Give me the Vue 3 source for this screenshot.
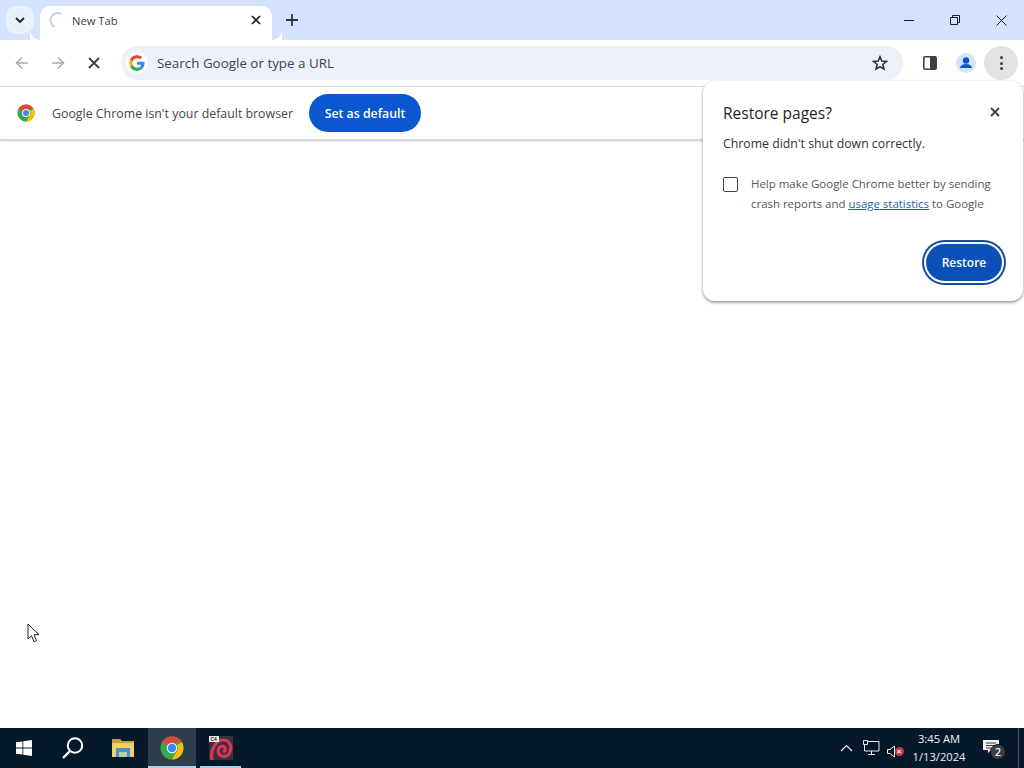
<script setup>
</script>

<template>
  <div class="screen">
    <header class="titlebar">
      <button class="tabsearch">
        <svg width="10" height="6" viewBox="0 0 10 6"><path d="M1 1l4 4 4-4" fill="none" stroke="#1f1f1f" stroke-width="1.8"/></svg>
      </button>
      <div class="tab">
        <svg class="spinner" width="16" height="16" viewBox="0 0 16 16"><path d="M13 1.8A7 7 0 0 0 6.5 14.8" fill="none" stroke="#c3d0e8" stroke-width="2"/></svg>
        <span class="tabtitle">New Tab</span>
        <svg class="tabclose" width="10" height="10" viewBox="0 0 10 10"><path d="M1 1l8 8M9 1l-8 8" stroke="#1f1f1f" stroke-width="1.7"/></svg>
      </div>
      <svg class="newtab" width="12" height="12" viewBox="0 0 12 12"><path d="M6 0v12M0 6h12" stroke="#303640" stroke-width="1.8"/></svg>
      <div class="wincontrols">
        <svg width="10" height="10" viewBox="0 0 10 10"><path d="M0 5.500h10" stroke="#1a1a2a" stroke-width="1"/></svg>
        <svg width="10" height="10" viewBox="0 0 10 10"><path d="M.5 2.500h7v7h-7zM2.500 2.500v-2h7v7h-2" fill="none" stroke="#1a1a2a"/></svg>
        <svg width="11" height="11" viewBox="0 0 11 11"><path d="M.5.5l10 10M10.500.5l-10 10" stroke="#1a1a2a"/></svg>
      </div>
    </header>

    <nav class="toolbar">
      <svg class="nav" width="14" height="14" viewBox="0 0 14 14"><path d="M13 7H2M7 1.500L1.500 7 7 12.500" fill="none" stroke="#a9abad" stroke-width="1.6"/></svg>
      <svg class="nav" width="14" height="14" viewBox="0 0 14 14"><path d="M1 7h11M7 1.500L12.500 7 7 12.500" fill="none" stroke="#a9abad" stroke-width="1.6"/></svg>
      <svg class="nav stop" width="12" height="12" viewBox="0 0 12 12"><path d="M1 1l10 10M11 1L1 11" stroke="#3c3f43" stroke-width="1.8"/></svg>
      <div class="omnibox">
        <svg class="glogo" width="16" height="16" viewBox="0 0 48 48">
          <path fill="#ea4335" d="M24 9.500c3.500 0 6.700 1.200 9.200 3.600l6.900-6.900C35.900 2.400 30.500 0 24 0 14.600 0 6.500 5.400 2.600 13.200l8 6.200C12.500 13.600 17.800 9.500 24 9.500z"/>
          <path fill="#4285f4" d="M47 24.500c0-1.600-.1-3.100-.4-4.500H24v9h12.900c-.6 3-2.200 5.500-4.700 7.200l7.700 6c4.500-4.200 7.100-10.300 7.100-17.700z"/>
          <path fill="#fbbc05" d="M10.500 28.600c-.5-1.400-.8-3-.8-4.600s.3-3.200.8-4.600l-8-6.200C.9 16.500 0 20.100 0 24s.9 7.500 2.600 10.800l7.900-6.200z"/>
          <path fill="#34a853" d="M24 48c6.500 0 11.900-2.100 15.900-5.800l-7.700-6c-2.200 1.400-4.900 2.300-8.200 2.300-6.200 0-11.500-4.200-13.400-9.800l-8 6.200C6.500 42.600 14.600 48 24 48z"/>
        </svg>
        <span class="omnitext">Search Google or type a URL</span>
        <svg class="star" width="16" height="16" viewBox="0 0 16 16"><path d="M8 1.800l1.800 4.300 4.600.4-3.500 3 1.100 4.500L8 11.600 4 14l1.100-4.500-3.500-3 4.600-.4z" fill="none" stroke="#303338" stroke-width="1.600"/></svg>
      </div>
      <svg class="side" width="14" height="14" viewBox="0 0 14 14"><rect x=".8" y=".8" width="12.400" height="12.400" rx="1.200" fill="#fff" stroke="#3c3f43" stroke-width="1.600"/><rect x="7" y="1" width="6" height="12" fill="#3c3f43"/></svg>
      <div class="avatar">
        <svg width="20" height="20" viewBox="0 0 20 20"><circle cx="10" cy="10" r="10" fill="#d3e3fd"/><circle cx="10" cy="7.500" r="3.200" fill="#0b57d0"/><path d="M3.800 15c.6-2.800 3.300-4 6.200-4s5.600 1.200 6.200 4z" fill="#0b57d0"/></svg>
      </div>
      <div class="menu"><i></i><i></i><i></i></div>
    </nav>

    <section class="infobar">
      <svg class="chrome" width="18" height="18" viewBox="0 0 48 48">
        <circle cx="24" cy="24" r="23" fill="#34a853"/>
        <path d="M24 1a23 23 0 0 1 19.900 11.500H24a11.500 11.500 0 0 0-10.300 6.400L4.500 11.800A23 23 0 0 1 24 1z" fill="#ea4335"/>
        <path d="M43.900 12.500A23 23 0 0 1 24 47l9.800-17A11.500 11.500 0 0 0 34 18z" fill="#fbbc05"/>
        <circle cx="24" cy="24" r="10.500" fill="#fff"/><circle cx="24" cy="24" r="8" fill="#4285f4"/>
      </svg>
      <span class="infotext">Google Chrome isn't your default browser</span>
      <button class="default">Set as default</button>
    </section>

    <main class="page"></main>

    <footer class="taskbar">
      <div class="start">
        <svg width="16" height="16" viewBox="0 0 16 16"><path fill="#fff" d="M0 2.300l6.500-.9v6.200H0zM7.300 1.300L16 0v7.600H7.300zM0 8.400h6.500v6.200L0 13.700zM7.300 8.400H16V16l-8.700-1.200z"/></svg>
      </div>
      <div class="tbitem search">
        <svg width="24" height="24" viewBox="0 0 24 24"><circle cx="14" cy="9.500" r="7.200" fill="none" stroke="#fff" stroke-width="2"/><path d="M9 15l-7 7" stroke="#fff" stroke-width="2.400"/></svg>
      </div>
      <div class="tbitem folder">
        <svg width="22" height="18" viewBox="0 0 22 18"><path fill="#c99f4a" d="M0 0h8l2 2h12v4H0z"/><path fill="#f5cf6b" d="M0 4h22v14H0z"/><path fill="#4a93c8" d="M4 9h14v9h-3v-5H7v5H4z"/><path fill="#8fc2e6" d="M7 13h8v5H7z" opacity=".5"/></svg>
      </div>
      <div class="tbitem active">
        <svg width="24" height="24" viewBox="0 0 48 48">
          <circle cx="24" cy="24" r="23" fill="#34a853"/>
          <path d="M24 1a23 23 0 0 1 19.900 11.500H24a11.500 11.500 0 0 0-10.300 6.400L4.500 11.800A23 23 0 0 1 24 1z" fill="#ea4335"/>
          <path d="M43.900 12.500A23 23 0 0 1 24 47l9.800-17A11.500 11.500 0 0 0 34 18z" fill="#fbbc05"/>
          <circle cx="24" cy="24" r="10.500" fill="#fff"/><circle cx="24" cy="24" r="8.500" fill="#4285f4"/>
        </svg>
      </div>
      <div class="tbitem running">
        <svg width="24" height="24" viewBox="0 0 24 24">
          <rect width="24" height="24" fill="#33343a"/>
          <path d="M3 24C1 14 7 4 14 4c7 0 9 7 7 12-2 5-8 6-11 2-2-4 0-8 4-8 3 1 3 5 0 6" fill="none" stroke="#e0325a" stroke-width="3.200"/>
          <rect x="0" y="0" width="10" height="6" fill="#eeeeee"/>
          <text x="1.500" y="5" class="c4">C4</text>
        </svg>
      </div>
      <div class="tray">
        <svg class="chevron" width="13" height="8" viewBox="0 0 13 8"><path d="M1 7l5.500-5.500L12 7" fill="none" stroke="#e8e8e8" stroke-width="1.200"/></svg>
        <svg width="17" height="16" viewBox="0 0 17 16"><path d="M4.500 1.500h11.500v9.500H1.500V5M8.500 11v3M5 14.500h7M.5.500h4v4h-4z" fill="none" stroke="#e8e8e8"/></svg>
        <div class="volume">
          <svg width="9" height="13" viewBox="0 0 9 13"><path d="M.5 4.500h2.500L7.500 1v11L3 8.500H.5z" fill="none" stroke="#e8e8e8"/></svg>
          <span class="muted">×</span>
        </div>
      </div>
      <div class="clock"><span>3:45 AM</span><span>1/13/2024</span></div>
      <div class="notify">
        <svg width="16" height="13" viewBox="0 0 16 13"><path fill="#f2f2f2" d="M0 0h16v10H8l-3 3v-3H0z"/><path d="M3 3h10M3 5.500h10M3 8h6" stroke="#333" stroke-width="1"/></svg>
        <span class="badge">2</span>
      </div>
      <div class="showdesk"></div>
    </footer>

    <aside class="bubble">
      <div class="bubblehead">
        <h2>Restore pages?</h2>
        <svg width="10" height="10" viewBox="0 0 10 10"><path d="M1 1l8 8M9 1l-8 8" stroke="#3c3f43" stroke-width="1.800"/></svg>
      </div>
      <p class="sub">Chrome didn't shut down correctly.</p>
      <div class="consent">
        <span class="check"></span>
        <p>Help make Google Chrome better by sending crash reports and <a>usage statistics</a> to Google</p>
      </div>
      <div class="actions"><button class="restore">Restore</button></div>
    </aside>

    <svg class="cursor" width="13" height="20" viewBox="0 0 13 20"><path d="M1 1v15l3.500-3.300 2.500 6 2.500-1-2.500-6H12z" fill="#fff" stroke="#222" stroke-width="1"/></svg>
  </div>
</template>

<style>
html, body { margin: 0; background: #fff; }
</style>

<style scoped>
.screen {
  position: relative;
  width: 1024px;
  height: 768px;
  overflow: hidden;
  display: flex;
  flex-direction: column;
  font-family: "Open Sans", "Noto Sans", sans-serif;
  background: #fff;
  color: #1f1f1f;
}
button { font-family: inherit; border: 0; padding: 0; }
.titlebar {
  height: 40px;
  flex: none;
  background: #d3e3fd;
  display: flex;
  align-items: flex-end;
  box-sizing: border-box;
  padding-left: 6px;
}
.tabsearch {
  width: 28px;
  height: 28px;
  border-radius: 10px;
  background: #e8f0fb;
  margin-bottom: 6px;
  display: flex;
  align-items: center;
  justify-content: center;
}
.tab {
  position: relative;
  width: 232px;
  height: 34px;
  margin-left: 6px;
  background: #fff;
  border-radius: 10px 10px 0 0;
  display: flex;
  align-items: center;
  padding: 0 11px 6px 8px;
  box-sizing: border-box;
}
.tab::before, .tab::after {
  content: "";
  position: absolute;
  bottom: 0;
  width: 10px;
  height: 10px;
  background: radial-gradient(circle at 100% 0, #d3e3fd 9.500px, #fff 10px);
}
.tab::before { left: -10px; }
.tab::after { right: -10px; transform: scaleX(-1); }
.tabtitle { font-size: 11.200px; margin-left: 8px; color: #3a3d41; flex: 1; }
.newtab { align-self: center; margin-left: 14px; }
.wincontrols {
  margin-left: auto;
  align-self: center;
  display: flex;
  align-items: center;
  gap: 36px;
  padding-right: 17px;
}
.toolbar {
  height: 46px;
  flex: none;
  background: #fff;
  border-bottom: 1px solid #e3e3e3;
  display: flex;
  align-items: center;
  padding-left: 15px;
}
.nav { margin-right: 22px; }
.nav.stop { margin-left: 1px; margin-right: 21px; }
.omnibox {
  width: 782px;
  height: 34px;
  border-radius: 17px;
  background: #edf2fa;
  display: flex;
  align-items: center;
  box-sizing: border-box;
  padding: 0 15px 0 0;
  position: relative;
  margin-top: -1px;
}
.glogo {
  margin-left: 8px;
  background: #fff;
  border-radius: 50%;
  box-shadow: 0 0 0 3px #fff;
}
.omnitext { font-size: 13.400px; color: #3f4347; margin-left: 12px; flex: 1; }
.side { margin-left: 20px; }
.avatar { margin-left: 19px; height: 20px; }
.menu {
  margin-left: 8px;
  width: 34px;
  height: 34px;
  border-radius: 50%;
  background: #e2e2e2;
  display: flex;
  flex-direction: column;
  align-items: center;
  justify-content: center;
  gap: 2.500px;
}
.menu i { width: 3px; height: 3px; border-radius: 50%; background: #3c3f43; }
.infobar {
  height: 53px;
  flex: none;
  display: flex;
  align-items: center;
  padding: 0 0 0 17px;
  box-sizing: border-box;
  border-bottom: 1px solid #d6d6d6;
  box-shadow: 0 1px 2px rgba(60, 64, 67, .3);
  position: relative;
}
.infotext { font-size: 12.370px; color: #444749; margin-left: 17px; }
.default {
  margin-left: 16px;
  width: 112px;
  height: 38px;
  border-radius: 19px;
  background: #0b57d0;
  color: #fff;
  font-size: 12.300px;
  font-weight: 600;
}
.page { flex: 1; background: #fff; }
.taskbar {
  height: 40px;
  flex: none;
  background: #06192a;
  display: flex;
  align-items: center;
  color: #fff;
}
.start { width: 48px; height: 40px; display: flex; align-items: center; justify-content: center; }
.tbitem {
  height: 40px;
  display: flex;
  align-items: center;
  justify-content: center;
  box-sizing: border-box;
}
.tbitem.search { width: 49px; }
.tbitem.folder { width: 51px; }
.tbitem.active { width: 48px; background: #2f3e4b; border-bottom: 2px solid #a5d0f2; padding-top: 2px; }
.tbitem.running { border-bottom: 2px solid #a5d0f2; width: 41px; margin-left: 4px; padding-top: 2px; }
.c4 { font: 700 5px "Liberation Sans", sans-serif; fill: #222; }
.tray { margin-left: auto; display: flex; align-items: center; gap: 8px; }
.chevron { margin-right: 2px; }
.volume { position: relative; width: 17px; height: 14px; margin-left: -1px; }
.muted {
  position: absolute;
  left: 7.500px;
  top: 5.500px;
  width: 9px;
  height: 9px;
  border-radius: 50%;
  background: #c8374a;
  font: 700 8px/9px "Liberation Sans", sans-serif;
  text-align: center;
}
.clock {
  width: 70px;
  display: flex;
  flex-direction: column;
  align-items: center;
  font-size: 11.200px;
  line-height: 18px;
  color: #eef1f4;
}
.notify { position: relative; margin-left: 9px; width: 24px; height: 24px; display: flex; padding-top: 4px; box-sizing: border-box; }
.badge {
  position: absolute;
  left: 7px;
  top: 8px;
  width: 14px;
  height: 14px;
  border-radius: 50%;
  background: #3b3f44;
  border: 1px solid #111;
  font-size: 10.500px;
  line-height: 14px;
  text-align: center;
  font-weight: 600;
}
.showdesk { width: 1px; height: 40px; background: #4a5560; margin-left: 11px; margin-right: 5px; }
.bubble {
  position: absolute;
  left: 703px;
  top: 81px;
  width: 320px;
  height: 220px;
  box-sizing: border-box;
  border-radius: 12px;
  background: #fff;
  box-shadow: 0 1px 3px rgba(60, 64, 67, .35), 0 2px 3px rgba(60, 64, 67, .3);
  padding: 20px 20px 0;
}
.bubblehead { display: flex; justify-content: space-between; align-items: center; padding-right: 3px; height: 24px; }
.bubblehead svg { margin-top: -3px; }
.bubblehead h2 { margin: 0; font-size: 15.500px; font-weight: 500; color: #1f1f1f; }
.sub { margin: 9px 0 0; font-size: 12.300px; line-height: 20px; color: #333; }
.consent { display: flex; margin-top: 20px; gap: 12px; }
.check {
  flex: none;
  margin-top: 3px;
  border: 1.500px solid #444;
  border-radius: 2px;
  width: 13px;
  height: 13px;
}
.consent p { margin: 0 0 0 1px; font-size: 11.450px; line-height: 20px; color: #555; width: 250px; }
.consent a { color: #1c5fa8; text-decoration: underline; }
.actions { display: flex; justify-content: flex-end; margin-top: 30px; }
.restore {
  width: 76px;
  height: 37px;
  border-radius: 19px;
  background: #0b4fb8;
  color: #fff;
  font-size: 12px;
  font-weight: 600;
  box-shadow: 0 0 0 2px #fff, 0 0 0 4px #1a4a9a;
  margin-right: 1px;
}
.cursor { position: absolute; left: 27px; top: 623px; }
</style>
